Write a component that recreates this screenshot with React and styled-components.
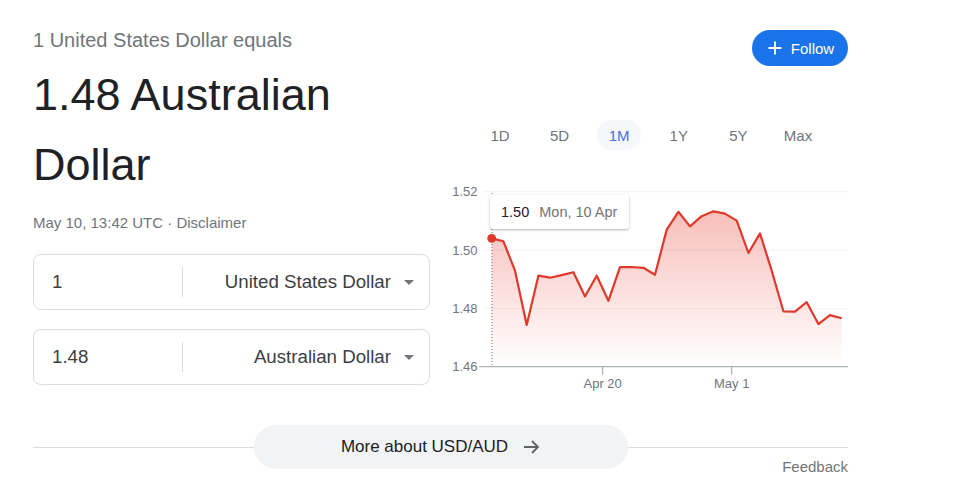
import React from "react";
import styled, { createGlobalStyle } from "styled-components";

const GlobalStyle = createGlobalStyle`
  body {
    margin: 0;
    background: #fff;
    font-family: Arial, "Liberation Sans", sans-serif;
  }
`;

// daily USD/AUD closes, Apr 10 -> May 10
const rates = [
  1.504, 1.503, 1.4929, 1.4743, 1.4912, 1.4905, 1.4914, 1.4924, 1.4841, 1.4912,
  1.4826, 1.4941, 1.4942, 1.4939, 1.4915, 1.507, 1.5131, 1.5081, 1.5116, 1.5133,
  1.5125, 1.5101, 1.499, 1.5057, 1.4929, 1.479, 1.4789, 1.4821, 1.4746, 1.4777,
  1.4766,
];

const ranges = ["1D", "5D", "1M", "1Y", "5Y", "Max"];
const gridValues = [1.52, 1.5, 1.48];
const ticks = [
  { label: "Apr 20", x: 162.7 },
  { label: "May 1", x: 291.7 },
];

const CHART_W = 408;
const CHART_H = 220;
const AXIS_Y = 187.7;
const X0 = 51.7;
const STEP = 11.667;
const yOf = (v) => AXIS_Y - ((v - 1.46) / 0.02) * 58.33;
const xOf = (i) => X0 + i * STEP;

const Page = styled.div`
  width: 815px;
  padding: 28px 0 0 33px;
`;

const Top = styled.div`
  display: flex;
  gap: 10px;
`;

const Summary = styled.div`
  width: 397px;
  display: flex;
  flex-direction: column;
`;

const Equals = styled.div`
  font-size: 20px;
  line-height: 24px;
  color: #70757a;
`;

const Value = styled.div`
  margin-top: 8px;
  font-size: 45px;
  line-height: 70px;
  color: #202124;
`;

const Stamp = styled.div`
  margin-top: 13px;
  font-size: 15px;
  line-height: 20px;
  color: #70757a;
`;

const Converter = styled.div`
  margin-top: 21px;
  display: flex;
  flex-direction: column;
  gap: 19px;
`;

const Field = styled.div`
  height: 56px;
  box-sizing: border-box;
  border: 1px solid #dadce0;
  border-radius: 8px;
  display: flex;
  align-items: center;
  font-size: 18.7px;
  color: #3c4043;
`;

const Amount = styled.div`
  width: 149px;
  box-sizing: border-box;
  padding-left: 18px;
  border-right: 1px solid #dadce0;
  height: 30px;
  line-height: 30px;
`;

const Currency = styled.div`
  flex: 1;
  display: flex;
  align-items: center;
  justify-content: flex-end;
  gap: 13px;
  padding-right: 15px;
`;

const Caret = styled.span`
  width: 0;
  height: 0;
  border-left: 5px solid transparent;
  border-right: 5px solid transparent;
  border-top: 5px solid #70757a;
`;

const Market = styled.div`
  flex: 1;
  display: flex;
  flex-direction: column;
`;

const Header = styled.div`
  margin-top: 2px;
  display: flex;
  justify-content: flex-end;
`;

const FollowButton = styled.button`
  height: 36px;
  width: 96px;
  border: none;
  border-radius: 18px;
  background: #1a73e8;
  color: #fff;
  font-family: inherit;
  font-size: 15px;
  display: flex;
  align-items: center;
  justify-content: center;
  gap: 9px;
  padding: 0 0 0 2px;
`;

const Ranges = styled.div`
  margin-top: 54px;
  padding-left: 38px;
  display: flex;
  gap: 15.6px;
`;

const Range = styled.div`
  width: 44px;
  height: 30px;
  border-radius: 15px;
  display: flex;
  align-items: center;
  justify-content: center;
  font-size: 15px;
  color: ${(p) => (p.$active ? "#4a6fdc" : "#70757a")};
  background: ${(p) => (p.$active ? "#f5f7fa" : "transparent")};
`;

const ChartBox = styled.div`
  position: relative;
  margin-top: 29px;
  height: ${CHART_H}px;
`;

const Tooltip = styled.div`
  position: absolute;
  left: 50px;
  top: 16px;
  width: 139px;
  height: 34px;
  box-sizing: border-box;
  padding-left: 11px;
  display: flex;
  align-items: center;
  gap: 10px;
  background: #fff;
  border-radius: 3px;
  box-shadow: 0 1px 3px rgba(60, 64, 67, 0.3), 0 1px 1px rgba(60, 64, 67, 0.1);
  font-size: 14.5px;
  color: #202124;

  span {
    color: #70757a;
  }
`;

const Footer = styled.div`
  margin-top: 26px;
  display: flex;
  align-items: center;
`;

const Rule = styled.div`
  flex: 1;
  height: 1px;
  background: #dadce0;
`;

const MoreButton = styled.button`
  width: 374px;
  height: 44px;
  border: none;
  border-radius: 22px;
  background: #f1f3f4;
  font-family: inherit;
  font-size: 17px;
  color: #202124;
  display: flex;
  align-items: center;
  justify-content: center;
  gap: 15px;
  padding: 0;
`;

const Feedback = styled.div`
  margin-top: -12px;
  text-align: right;
  font-size: 15px;
  line-height: 20px;
  color: #70757a;
`;

const PlusIcon = () => (
  <svg width="14" height="14" viewBox="0 0 14 14">
    <path d="M7 0.5v13M0.5 7h13" stroke="#fff" strokeWidth="2" />
  </svg>
);

const ArrowIcon = () => (
  <svg width="17" height="16" viewBox="0 0 17 16">
    <path d="M1 8h14M9 2l6 6-6 6" fill="none" stroke="#5f6368" strokeWidth="1.8" />
  </svg>
);

const RateChart = () => {
  const pts = rates.map((v, i) => `${xOf(i).toFixed(1)},${yOf(v).toFixed(1)}`);
  const line = `M${pts.join("L")}`;
  const area = `${line}L${xOf(rates.length - 1)},${AXIS_Y}L${X0},${AXIS_Y}Z`;

  return (
    <svg width={CHART_W} height={CHART_H} style={{ display: "block" }}>
      <defs>
        <linearGradient id="fade" x1="0" y1="0" x2="0" y2="1">
          <stop offset="0%" stopColor="#ea4335" stopOpacity="0.34" />
          <stop offset="100%" stopColor="#ea4335" stopOpacity="0" />
        </linearGradient>
      </defs>
      {gridValues.map((v) => (
        <line key={v} x1="44" x2={CHART_W} y1={yOf(v)} y2={yOf(v)} stroke="#f1f3f4" />
      ))}
      {[...gridValues, 1.46].map((v) => (
        <text
          key={v}
          x="37.5"
          y={yOf(v) + 4.6}
          textAnchor="end"
          fontSize="13"
          fill="#70757a"
          fontFamily="Arial, 'Liberation Sans', sans-serif"
        >
          {v.toFixed(2)}
        </text>
      ))}
      <path d={area} fill="url(#fade)" />
      <line x1="52" x2="52" y1="14" y2={AXIS_Y} stroke="#70757a" strokeDasharray="1 2" />
      <line x1="39.3" x2={CHART_W} y1={AXIS_Y} y2={AXIS_Y} stroke="#9aa0a6" />
      {ticks.map((t) => (
        <g key={t.label}>
          <line x1={t.x} x2={t.x} y1={AXIS_Y} y2={AXIS_Y + 8} stroke="#9aa0a6" />
          <text
            x={t.x}
            y="209"
            textAnchor="middle"
            fontSize="13"
            fill="#70757a"
            fontFamily="Arial, 'Liberation Sans', sans-serif"
          >
            {t.label}
          </text>
        </g>
      ))}
      <path d={line} fill="none" stroke="#e0392b" strokeWidth="2.2" strokeLinejoin="round" />
      <circle cx={xOf(0)} cy={yOf(rates[0])} r="4.4" fill="#e0392b" />
    </svg>
  );
};

export default function App() {
  return (
    <Page>
      <GlobalStyle />
      <Top>
        <Summary>
          <Equals>1 United States Dollar equals</Equals>
          <Value>1.48 Australian Dollar</Value>
          <Stamp>May 10, 13:42 UTC · Disclaimer</Stamp>
          <Converter>
            <Field>
              <Amount>1</Amount>
              <Currency>
                United States Dollar
                <Caret />
              </Currency>
            </Field>
            <Field>
              <Amount>1.48</Amount>
              <Currency>
                Australian Dollar
                <Caret />
              </Currency>
            </Field>
          </Converter>
        </Summary>
        <Market>
          <Header>
            <FollowButton>
              <PlusIcon />
              Follow
            </FollowButton>
          </Header>
          <Ranges>
            {ranges.map((r) => (
              <Range key={r} $active={r === "1M"}>
                {r}
              </Range>
            ))}
          </Ranges>
          <ChartBox>
            <RateChart />
            <Tooltip>
              1.50<span>Mon, 10 Apr</span>
            </Tooltip>
          </ChartBox>
        </Market>
      </Top>
      <Footer>
        <Rule />
        <MoreButton>
          More about USD/AUD
          <ArrowIcon />
        </MoreButton>
        <Rule />
      </Footer>
      <Feedback>Feedback</Feedback>
    </Page>
  );
}
